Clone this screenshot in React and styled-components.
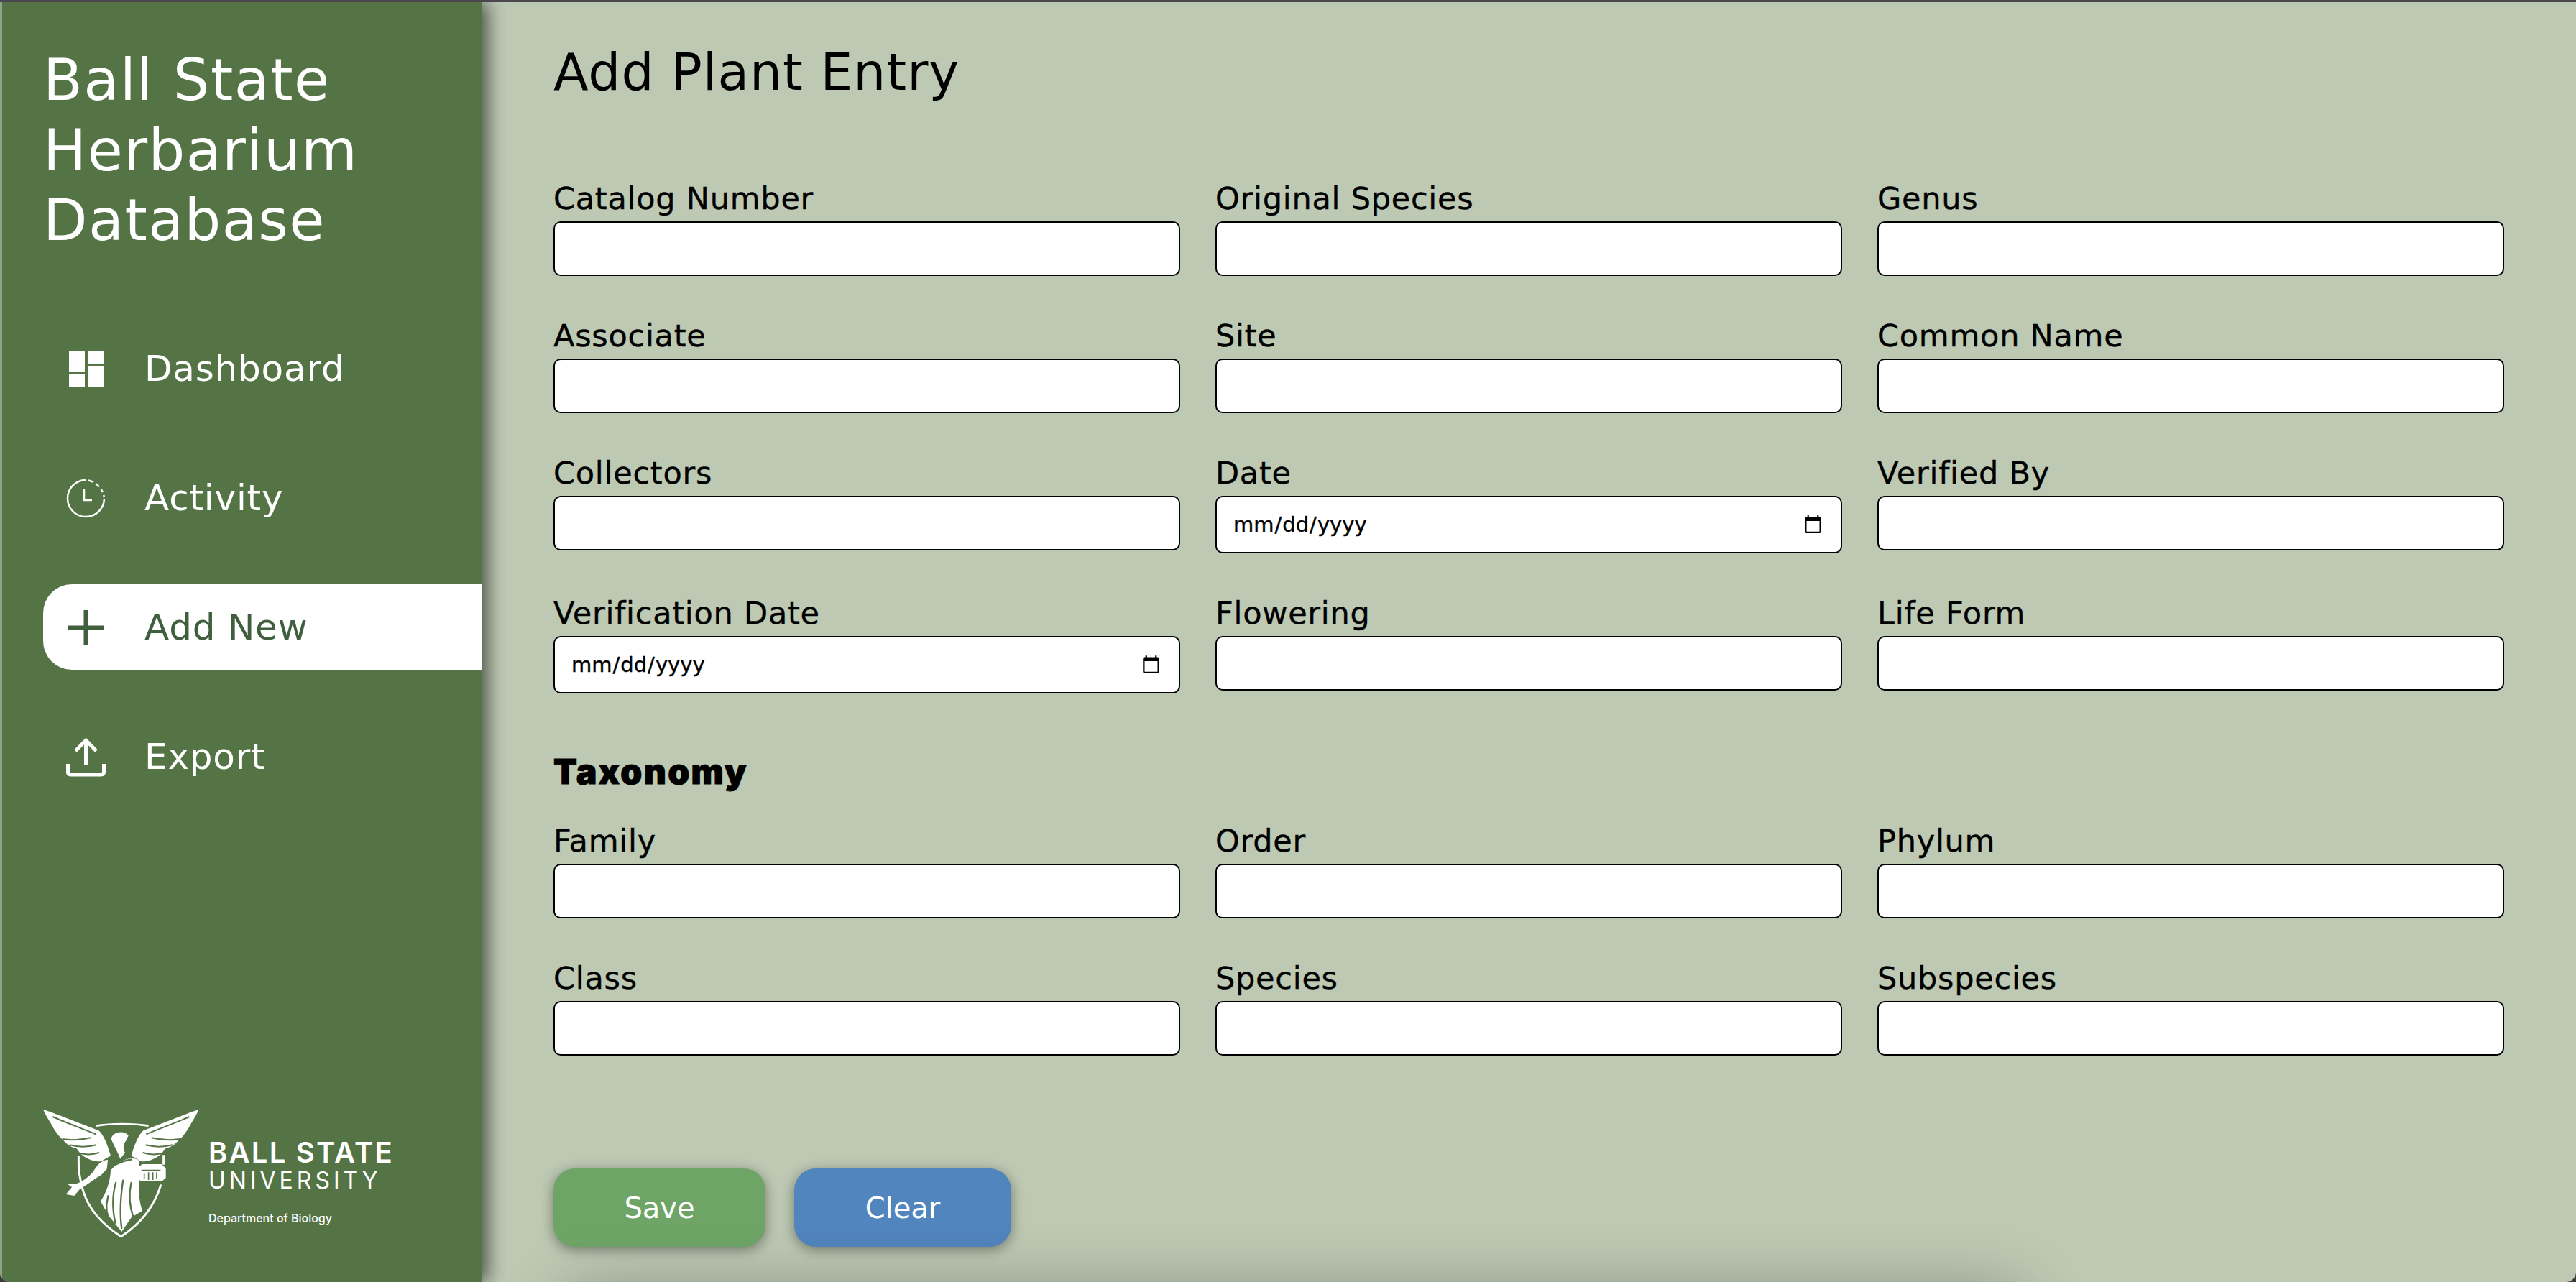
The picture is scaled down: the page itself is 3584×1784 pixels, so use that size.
import React from 'react'
import styled, { createGlobalStyle } from 'styled-components'

const GlobalStyle = createGlobalStyle`
  html, body {
    margin: 0;
    height: 100%;
    background: #3a3a3a;
    font-family: "DejaVu Sans", "Liberation Sans", sans-serif;
  }
  * { box-sizing: border-box; }
`

const Frame = styled.div`
  display: flex;
  height: 100vh;
  border-top: 3px solid #4b4650;
  border-radius: 0 0 14px 14px;
  overflow: hidden;
  background: #bdc9b3;
`

const Sidebar = styled.aside`
  display: flex;
  flex-direction: column;
  flex: 0 0 670px;
  border-left: 3px solid #8fa386;
  background: #557445;
  box-shadow: 8px 0 24px rgba(0, 0, 0, 0.6);
  position: relative;
  z-index: 1;
`

const Brand = styled.h1`
  margin: 60px 0 0 57px;
  font-size: 80px;
  line-height: 97.5px;
  font-weight: 400;
  letter-spacing: 1.4px;
  color: #fff;
`

const Nav = styled.nav`
  display: flex;
  flex-direction: column;
  gap: 61px;
  margin: 97px 0 0 57px;
`

const NavItem = styled.a`
  display: flex;
  align-items: center;
  gap: 54px;
  height: 119px;
  padding: 2px 0 0 32px;
  border-radius: 40px 0 0 40px;
  font-size: 50px;
  font-weight: 400;
  letter-spacing: 0.8px;
  color: ${p => (p.$active ? '#3f5f3f' : '#fff')};
  background: ${p => (p.$active ? '#fff' : 'transparent')};
`

const NavIcon = styled.svg`
  flex: 0 0 55px;
  width: 55px;
  height: 55px;
`

const Footer = styled.div`
  display: flex;
  margin: auto 0 54px 47px;
`

const Wordmark = styled.div`
  display: flex;
  flex-direction: column;
  padding-top: 54px;
  font-family: Inter, sans-serif;
  color: #fff;
`

const WordmarkTop = styled.span`
  font-size: 40px;
  line-height: 40px;
  font-weight: 600;
  letter-spacing: 2.2px;
`

const WordmarkSub = styled.span`
  font-size: 32px;
  line-height: 38px;
  font-weight: 400;
  letter-spacing: 5px;
`

const WordmarkDept = styled.span`
  margin-top: 23px;
  font-size: 16px;
  line-height: 20px;
  font-weight: 500;
`

const Main = styled.main`
  flex: 1;
  display: flex;
  flex-direction: column;
  position: relative;
  padding: 54px 100px 0;

  &::after {
    content: '';
    position: absolute;
    left: 130px;
    top: 1805px;
    width: 2000px;
    height: 100px;
    box-shadow: 0 0 90px 10px rgba(0, 0, 0, 0.3);
  }
`

const PageTitle = styled.h2`
  margin: 0 0 102px;
  font-size: 71px;
  line-height: 88px;
  font-weight: 400;
  letter-spacing: 1px;
  color: #000;
`

const FieldGrid = styled.div`
  display: grid;
  grid-template-columns: repeat(3, 872px);
  column-gap: 49px;
  row-gap: 54px;
`

const Field = styled.label`
  display: flex;
  flex-direction: column;
  gap: 3px;
  font-size: 43px;
  line-height: 58px;
  font-weight: 400;
  letter-spacing: 0.75px;
  -webkit-text-stroke: 0.4px #000;
  color: #000;
`

const TextInput = styled.input`
  width: 100%;
  height: ${p => (p.type === 'date' ? '80px' : '76px')};
  padding: 0 22px;
  border: 2px solid #000;
  border-radius: 10px;
  background: #fff;
  font-family: inherit;
  font-size: 29px;
  color: #000;
`

const SectionTitle = styled.h3`
  margin: 80px 0 38px;
  font-family: Inter, sans-serif;
  font-size: 48px;
  line-height: 58px;
  font-weight: 900;
  letter-spacing: 2.3px;
  -webkit-text-stroke: 1px #000;
  color: #000;
`

const Actions = styled.div`
  display: flex;
  gap: 40px;
  margin-top: 157px;
`

const ActionButton = styled.button`
  height: 109px;
  width: ${p => p.$width}px;
  border: none;
  border-radius: 30px;
  background: ${p => p.$color};
  box-shadow: 0 4px 18px rgba(0, 0, 0, 0.4);
  font-family: inherit;
  font-size: 40px;
  font-weight: 400;
  color: #fff;
`

const DashboardIcon = () => (
  <NavIcon viewBox="0 0 55 55" fill="#fff">
    <rect x="4" y="3" width="22" height="28" />
    <rect x="30" y="3" width="22" height="17" />
    <rect x="4" y="35" width="22" height="17" />
    <rect x="30" y="24" width="22" height="28" />
  </NavIcon>
)

const ActivityIcon = () => (
  <NavIcon viewBox="0 0 55 55" fill="none" stroke="#fff" strokeWidth="2.5">
    <path d="M27 2 A25.5 25.5 0 1 0 53 28" />
    <path d="M31 2.5 A25.5 25.5 0 0 1 38 5 M41 7 A25.5 25.5 0 0 1 46 11.5 M48.5 15 A25.5 25.5 0 0 1 51 19 M52.3 23 L52.8 26" />
    <path d="M25 14 V30 H36" />
  </NavIcon>
)

const PlusIcon = () => (
  <NavIcon viewBox="0 0 55 55" fill="none" stroke="#3f5f3f" strokeWidth="6">
    <path d="M27.5 3 V52 M3 27.5 H52" />
  </NavIcon>
)

const ExportIcon = () => (
  <NavIcon viewBox="0 0 55 55" fill="none" stroke="#fff" strokeWidth="5">
    <path d="M27.5 38 V5 M13 19 L27.5 4 L42 19" />
    <path d="M2.5 37 V48 Q2.5 52 6.5 52 H48.5 Q52.5 52 52.5 48 V37" />
  </NavIcon>
)

const wingShape = 'M30 42 L60 52 L262 130 C285 150 300 195 312 235 L272 258 C240 262 205 245 185 225 L170 205 C150 200 130 190 112 168 C95 155 75 125 62 100 C50 80 38 60 30 42 Z'
const wingLines = 'M70 72 C120 95 190 120 250 145 M110 165 C150 172 190 168 228 160 M140 190 C180 200 220 198 252 190 M185 225 C215 232 240 230 264 222'

const BsuLogo = () => (
  <svg viewBox="0 0 720 600" width="240" height="200" fill="#fff">
    <path d={wingShape} />
    <path d={wingLines} fill="none" stroke="#557445" strokeWidth="6" />
    <g transform="translate(710 0) scale(-1 1)">
      <path d={wingShape} />
      <path d={wingLines} fill="none" stroke="#557445" strokeWidth="6" />
    </g>
    <path d="M250 110 C310 100 410 100 470 110" fill="none" stroke="#fff" strokeWidth="8" />
    <path d="M178 235 C176 290 184 340 198 385 C225 470 290 530 355 572 C420 530 490 460 522 355 M533 232 V272" fill="none" stroke="#fff" strokeWidth="9" />
    <path d="M314 165 C316 140 362 124 386 150 L376 172 C364 188 362 205 372 222 L352 248 C340 215 326 195 314 165 Z" />
    <path d="M300 252 C272 254 255 275 240 300 C220 325 190 345 168 352 L130 352 L150 366 L125 396 L160 402 L182 376 C215 355 250 328 272 316 L296 290 Z" />
    <path d="M312 296 C340 258 400 232 430 255 L434 330 C426 380 430 420 444 465 L410 485 L400 490 L358 552 L340 530 L304 486 L270 425 C296 385 310 340 312 296 Z" />
    <path d="M288 308 C318 274 360 256 402 250 M334 345 C318 400 316 450 332 518 M364 335 C354 400 348 470 358 540 M398 345 C386 400 392 450 406 490 M302 400 C296 430 290 450 300 486" fill="none" stroke="#557445" strokeWidth="7" />
    <path d="M430 280 L445 270 H525 L542 288 V328 L525 342 H440 L425 330 Z" />
    <path d="M440 296 H520 M452 310 V330 M470 304 V336 M488 304 V336 M504 304 V330" fill="none" stroke="#557445" strokeWidth="5" />
  </svg>
)

const firstFields = [
  ['Catalog Number'], ['Original Species'], ['Genus'],
  ['Associate'], ['Site'], ['Common Name'],
  ['Collectors'], ['Date', 'date'], ['Verified By'],
  ['Verification Date', 'date'], ['Flowering'], ['Life Form'],
]

const taxonomyFields = ['Family', 'Order', 'Phylum', 'Class', 'Species', 'Subspecies']

const App = () => {
  return (
    <Frame>
      <GlobalStyle />
      <Sidebar>
        <Brand>Ball State<br />Herbarium<br />Database</Brand>
        <Nav>
          <NavItem><DashboardIcon />Dashboard</NavItem>
          <NavItem><ActivityIcon />Activity</NavItem>
          <NavItem $active><PlusIcon />Add New</NavItem>
          <NavItem><ExportIcon />Export</NavItem>
        </Nav>
        <Footer>
          <BsuLogo />
          <Wordmark>
            <WordmarkTop>BALL STATE</WordmarkTop>
            <WordmarkSub>UNIVERSITY</WordmarkSub>
            <WordmarkDept>Department of Biology</WordmarkDept>
          </Wordmark>
        </Footer>
      </Sidebar>
      <Main>
        <PageTitle>Add Plant Entry</PageTitle>
        <FieldGrid>
          {firstFields.map(([name, type]) => (
            <Field key={name}>{name}<TextInput type={type || 'text'} /></Field>
          ))}
        </FieldGrid>
        <SectionTitle>Taxonomy</SectionTitle>
        <FieldGrid>
          {taxonomyFields.map(name => (
            <Field key={name}>{name}<TextInput type="text" /></Field>
          ))}
        </FieldGrid>
        <Actions>
          <ActionButton $width={295} $color="#6ea566">Save</ActionButton>
          <ActionButton $width={302} $color="#5185be">Clear</ActionButton>
        </Actions>
      </Main>
    </Frame>
  )
}

export default App
